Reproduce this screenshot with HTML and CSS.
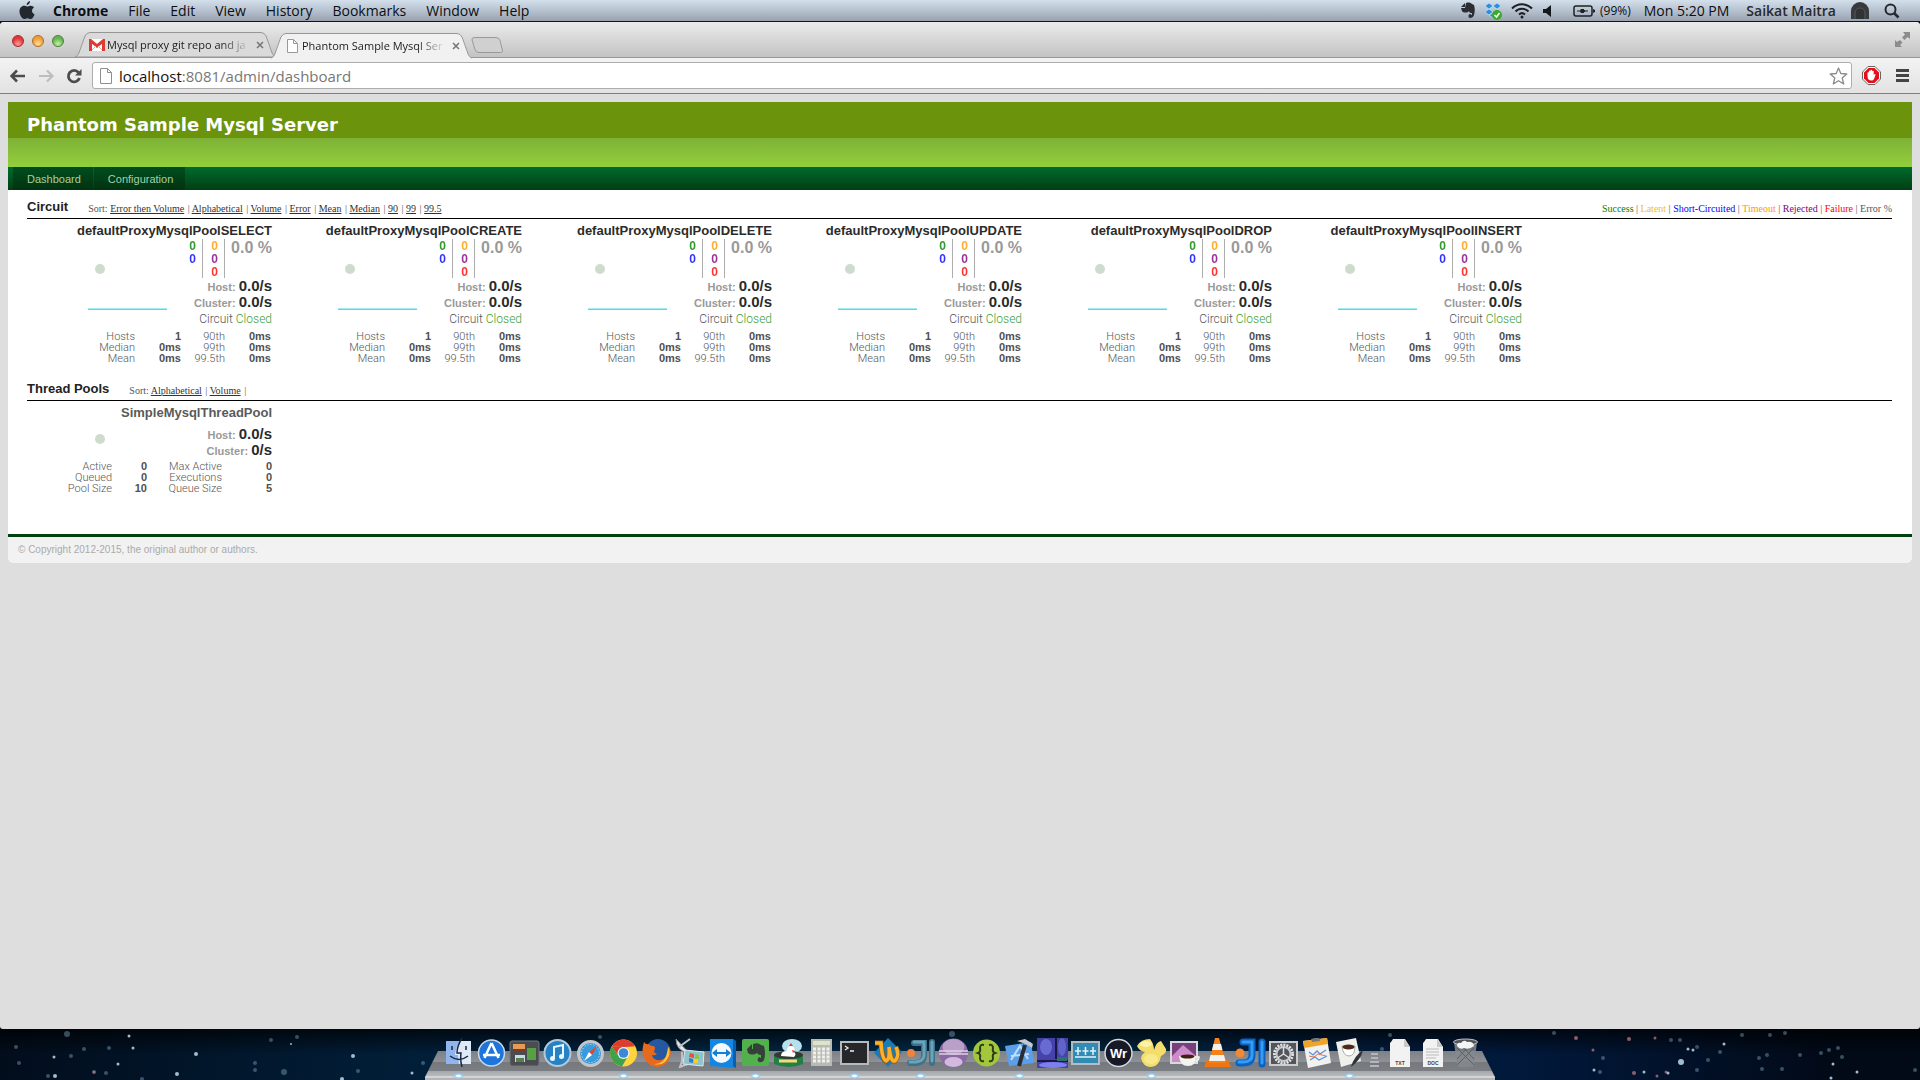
FILE: index.html
```html
<!DOCTYPE html>
<html lang="en">
<head>
<meta charset="utf-8">
<title>Phantom Sample Mysql Server</title>
<link rel="stylesheet" href="styles.css">
</head>
<body>
<header class="menubar">
  <svg class="apple" width="16" height="19" viewBox="0 0 16 19"><path d="M11 0c.2 2-1.500 4-3.300 4C7.500 2.200 9.200.400 11 0zM8 5.500C9 5.500 10 4.600 11.700 4.700c1.500.100 2.600.700 3.300 1.800-3 1.900-2.400 5.700.600 6.900-.700 2-2.300 4.600-3.900 4.600-1.300 0-1.800-.800-3.300-.800s-2 .800-3.300.800C3 18 .500 13.800.500 10.500.500 7 2.700 4.800 5 4.800c1.300 0 2.200.700 3 .700z" fill="#23272e"/></svg>
  <nav class="menus">
    <button class="menu app">Chrome</button><button class="menu">File</button><button class="menu">Edit</button><button class="menu">View</button><button class="menu">History</button><button class="menu">Bookmarks</button><button class="menu">Window</button><button class="menu">Help</button>
  </nav>
  <div class="status">
    <svg width="16" height="17" viewBox="0 0 16 17"><path d="M1 5l4-4v4zM6 1c3-1 5 0 6 1l2 1c1 3 1 7 0 10-.500 2-2 3-4 3s-2-4 0-4c1 0 1 1 2 1v-2c-1 0-3 0-3-2-1 2-6 2-7 0L1 6h4z" fill="#2a2d31"/></svg>
    <svg width="19" height="18" viewBox="0 0 19 18"><path d="M5 1l4 3-4 3-4-3zM13 1l4 3-4 3-4-3zM5 7l4 3-4 3-4-3zM13 7l4 3-4 3-4-3zM5 13l4-2 4 2-4 3z" fill="#2c8fd8" stroke="#e8f4fc" stroke-width=".5"/><circle cx="13" cy="13" r="5" fill="#3da92b"/><path d="M10.500 13l2 2 3-4" fill="none" stroke="#fff" stroke-width="1.500"/></svg>
    <svg class="wifi" width="22" height="17" viewBox="0 0 22 17"><path d="M1 6.500a14 14 0 0 1 20 0M4.500 9.500a9 9 0 0 1 13 0M8 12.500a4.500 4.500 0 0 1 6 0" fill="none" stroke="#1d2024" stroke-width="2"/><circle cx="11" cy="15" r="1.500" fill="#1d2024"/></svg>
    <svg class="volume" width="8" height="12" viewBox="0 0 8 12"><path d="M0 4h3l5-4v12L3 8H0z" fill="#15181b"/></svg>
    <svg width="22" height="12" viewBox="0 0 22 12"><path d="M3 1h14q2 0 2 2v6q0 2-2 2H3q-2 0-2-2V3q0-2 2-2z" fill="none" stroke="#222" stroke-width="1.500"/><path d="M20 4l2 1v2l-2 1zM4 5.500h3L8 4h3v1h4v.500h-3v1h3V7h-4v1H8L7 6.500H4z" fill="#222"/></svg>
    <span class="percent">(99%)</span>
    <span class="clock">Mon 5:20 PM</span>
    <span class="user">Saikat Maitra</span>
    <svg class="avatar" width="18" height="17" viewBox="0 0 18 17"><path d="M0 17V9a9 9 0 0 1 18 0v8z" fill="#383a3d"/><path d="M4 17v-6a5 5 0 0 1 10 0v6" fill="#303234" stroke="#55585b"/></svg>
    <svg width="16" height="16" viewBox="0 0 16 16"><circle cx="6.500" cy="6.500" r="5" fill="none" stroke="#25282c" stroke-width="2"/><path d="M10 10l4.500 4.500" stroke="#25282c" stroke-width="2.600"/></svg>
  </div>
</header>

<main class="window">
  <div class="tabstrip">
    <div class="lights"><button class="light red" aria-label="Close"></button><button class="light amber" aria-label="Minimise"></button><button class="light green" aria-label="Zoom"></button></div>
    <div class="tab">
      <svg class="shape" viewBox="0 0 202 25" preserveAspectRatio="none"><path d="M0 25C4 24 4 20 10 4Q12 .500 15 .500H187Q190 .500 192 4C198 20 198 24 202 25z" fill="#dadada" stroke="#969696"/></svg>
      <svg class="favicon" width="16" height="12" viewBox="0 0 16 12"><path d="M0 0h16v12H0z" fill="#fff"/><path d="M1.500 12V1.500L8 7l6.500-5.500V12" fill="none" stroke="#dc3c35" stroke-width="3"/><path d="M3 11l4-4M13 11L9 7" stroke="#e8a8a4"/></svg>
      <span class="tab-title">Mysql proxy git repo and ja</span>
      <button class="tab-close" aria-label="Close tab"><svg width="8" height="8" viewBox="0 0 8 8"><path d="M1 1l6 6M7 1L1 7" stroke="#777" stroke-width="1.600"/></svg></button>
    </div>
    <div class="tab active">
      <svg class="shape" viewBox="0 0 202 25" preserveAspectRatio="none"><path d="M0 25C4 24 4 20 10 4Q12 .500 15 .500H187Q190 .500 192 4C198 20 198 24 202 25" fill="#f1f1f1" stroke="#969696"/></svg>
      <svg class="favicon doc" width="11" height="14" viewBox="0 0 11 14"><path d="M.500.500h6l4 4v9H.500zM6.500.500v4h4" fill="#fff" stroke="#999"/></svg>
      <span class="tab-title">Phantom Sample Mysql Ser</span>
      <button class="tab-close" aria-label="Close tab"><svg width="8" height="8" viewBox="0 0 8 8"><path d="M1 1l6 6M7 1L1 7" stroke="#777" stroke-width="1.600"/></svg></button>
    </div>
    <button class="newtab" aria-label="New tab"><svg width="32" height="17" viewBox="0 0 32 17"><path d="M3 .500h22q3 0 4 3l2.500 10q.500 2-2 2H8q-3 0-4-3L1 3q-.500-2 2-2.500z" fill="#d0d0d0" stroke="#989898"/></svg></button>
    <button class="fullscreen" aria-label="Full screen"><svg width="15" height="15" viewBox="0 0 15 15"><path d="M8 0h7v7l-2.500-2-3 3-2.500-2.500 3-3zM0 8l2 2 3-2 2.500 2.500L5 13l2 2H0z" fill="#8c8c8c"/></svg></button>
  </div>
  <div class="toolbar">
    <button class="tool" aria-label="Back"><svg width="16" height="14" viewBox="0 0 16 14"><path d="M7 1.500L1.500 7 7 12.500M2 7h13" fill="none" stroke="#4c4c4c" stroke-width="2.600"/></svg></button>
    <button class="tool" aria-label="Forward"><svg width="16" height="14" viewBox="0 0 16 14"><path d="M9 1.500L14.500 7 9 12.500M14 7H1" fill="none" stroke="#bdbdbd" stroke-width="2.200"/></svg></button>
    <button class="tool" aria-label="Reload"><svg width="16" height="16" viewBox="0 0 16 16"><path d="M12.500 4.500A5.700 5.700 0 1 0 13.500 10" fill="none" stroke="#4c4c4c" stroke-width="2.800"/><path d="M15.500 1v6.500H9z" fill="#4c4c4c"/></svg></button>
    <div class="omnibox">
      <svg width="12" height="16" viewBox="0 0 12 16"><path d="M.500.500h7l4 4v11H.500zM7.500.500v4h4" fill="#fff" stroke="#8e8e8e"/></svg>
      <a class="url" href="#"><b>localhost</b>:8081/admin/dashboard</a>
      <button class="tool" aria-label="Bookmark"><svg width="19" height="18" viewBox="0 0 19 18"><path d="M9.500 1l2.300 5.500 6 .500-4.600 4 1.500 6-5.200-3.300L4.300 17l1.500-6-4.600-4 6-.500z" fill="#fff" stroke="#8a8a8a" stroke-width="1.300" stroke-linejoin="round"/></svg></button>
    </div>
    <button class="tool block" aria-label="AdBlock"><svg width="19" height="19" viewBox="0 0 19 19"><path d="M6 .500h7L18.500 6v7L13 18.500H6L.500 13V6z" fill="#fff" stroke="#666"/><path d="M6.500 2h6L17 6.500v6L12.500 17h-6L2 12.500v-6z" fill="#e3101c"/><path d="M5.500 10V6.500q.700-.700 1.400 0V5q.800-.800 1.500 0V4.200q.900-.800 1.700 0V5q.900-.700 1.600 0v4l1-1q1 0 .800.900L12 13q-.600 1.500-2.500 1.500-4 0-4-4.500z" fill="#fff"/></svg></button>
    <button class="tool more" aria-label="Menu"><svg width="13" height="13" viewBox="0 0 13 13"><path d="M0 1.500h13M0 6.500h13M0 11.500h13" stroke="#444" stroke-width="3"/></svg></button>
  </div>

  <div class="viewport">
    <article class="site">
      <header class="banner"><h1>Phantom Sample Mysql Server</h1></header>
      <nav class="sitenav"><a href="#">Dashboard</a><a href="#">Configuration</a></nav>
      <div class="content">
        <section>
          <div class="head">
            <h2>Circuit</h2>
            <p class="sort">Sort: <a href="#">Error then Volume</a> | <a href="#">Alphabetical</a> | <a href="#">Volume</a> | <a href="#">Error</a> | <a href="#">Mean</a> | <a href="#">Median</a> | <a href="#">90</a> | <a href="#">99</a> | <a href="#">99.5</a></p>
            <p class="legend"><span class="success">Success</span> | <span class="latent">Latent</span> | <span class="short">Short-Circuited</span> | <span class="timeout">Timeout</span> | <span class="rejected">Rejected</span> | <span class="failure">Failure</span> | <span>Error %</span></p>
          </div>
          <div class="monitors">
            <div class="monitor">
              <h3>defaultProxyMysqlPoolSELECT</h3>
              <div class="body">
                <svg class="chart" width="145" height="90"><circle cx="73" cy="30" r="5" fill="#cddccd"/><path d="M61 69.500h79" stroke="#a5eef8"/><path d="M61 70.500h79" stroke="#7cc0f8"/></svg>
                <div class="figures">
                  <div class="counts"><div class="count"><b class="success">0</b><b class="short">0</b></div><div class="count"><b class="timeout">0</b><b class="rejected">0</b><b class="failure">0</b></div><b class="rate-error">0.0 %</b></div>
                  <p class="rate">Host: <b>0.0/s</b></p><p class="rate">Cluster: <b>0.0/s</b></p><p class="state">Circuit <span>Closed</span></p>
                </div>
              </div>
              <table class="stats"><tr><th>Hosts</th><td>1</td><th>90th</th><td>0ms</td></tr><tr><th>Median</th><td>0ms</td><th>99th</th><td>0ms</td></tr><tr><th>Mean</th><td>0ms</td><th>99.5th</th><td>0ms</td></tr></table>
            </div>
            <div class="monitor">
              <h3>defaultProxyMysqlPoolCREATE</h3>
              <div class="body">
                <svg class="chart" width="145" height="90"><circle cx="73" cy="30" r="5" fill="#cddccd"/><path d="M61 69.500h79" stroke="#a5eef8"/><path d="M61 70.500h79" stroke="#7cc0f8"/></svg>
                <div class="figures">
                  <div class="counts"><div class="count"><b class="success">0</b><b class="short">0</b></div><div class="count"><b class="timeout">0</b><b class="rejected">0</b><b class="failure">0</b></div><b class="rate-error">0.0 %</b></div>
                  <p class="rate">Host: <b>0.0/s</b></p><p class="rate">Cluster: <b>0.0/s</b></p><p class="state">Circuit <span>Closed</span></p>
                </div>
              </div>
              <table class="stats"><tr><th>Hosts</th><td>1</td><th>90th</th><td>0ms</td></tr><tr><th>Median</th><td>0ms</td><th>99th</th><td>0ms</td></tr><tr><th>Mean</th><td>0ms</td><th>99.5th</th><td>0ms</td></tr></table>
            </div>
            <div class="monitor">
              <h3>defaultProxyMysqlPoolDELETE</h3>
              <div class="body">
                <svg class="chart" width="145" height="90"><circle cx="73" cy="30" r="5" fill="#cddccd"/><path d="M61 69.500h79" stroke="#a5eef8"/><path d="M61 70.500h79" stroke="#7cc0f8"/></svg>
                <div class="figures">
                  <div class="counts"><div class="count"><b class="success">0</b><b class="short">0</b></div><div class="count"><b class="timeout">0</b><b class="rejected">0</b><b class="failure">0</b></div><b class="rate-error">0.0 %</b></div>
                  <p class="rate">Host: <b>0.0/s</b></p><p class="rate">Cluster: <b>0.0/s</b></p><p class="state">Circuit <span>Closed</span></p>
                </div>
              </div>
              <table class="stats"><tr><th>Hosts</th><td>1</td><th>90th</th><td>0ms</td></tr><tr><th>Median</th><td>0ms</td><th>99th</th><td>0ms</td></tr><tr><th>Mean</th><td>0ms</td><th>99.5th</th><td>0ms</td></tr></table>
            </div>
            <div class="monitor">
              <h3>defaultProxyMysqlPoolUPDATE</h3>
              <div class="body">
                <svg class="chart" width="145" height="90"><circle cx="73" cy="30" r="5" fill="#cddccd"/><path d="M61 69.500h79" stroke="#a5eef8"/><path d="M61 70.500h79" stroke="#7cc0f8"/></svg>
                <div class="figures">
                  <div class="counts"><div class="count"><b class="success">0</b><b class="short">0</b></div><div class="count"><b class="timeout">0</b><b class="rejected">0</b><b class="failure">0</b></div><b class="rate-error">0.0 %</b></div>
                  <p class="rate">Host: <b>0.0/s</b></p><p class="rate">Cluster: <b>0.0/s</b></p><p class="state">Circuit <span>Closed</span></p>
                </div>
              </div>
              <table class="stats"><tr><th>Hosts</th><td>1</td><th>90th</th><td>0ms</td></tr><tr><th>Median</th><td>0ms</td><th>99th</th><td>0ms</td></tr><tr><th>Mean</th><td>0ms</td><th>99.5th</th><td>0ms</td></tr></table>
            </div>
            <div class="monitor">
              <h3>defaultProxyMysqlPoolDROP</h3>
              <div class="body">
                <svg class="chart" width="145" height="90"><circle cx="73" cy="30" r="5" fill="#cddccd"/><path d="M61 69.500h79" stroke="#a5eef8"/><path d="M61 70.500h79" stroke="#7cc0f8"/></svg>
                <div class="figures">
                  <div class="counts"><div class="count"><b class="success">0</b><b class="short">0</b></div><div class="count"><b class="timeout">0</b><b class="rejected">0</b><b class="failure">0</b></div><b class="rate-error">0.0 %</b></div>
                  <p class="rate">Host: <b>0.0/s</b></p><p class="rate">Cluster: <b>0.0/s</b></p><p class="state">Circuit <span>Closed</span></p>
                </div>
              </div>
              <table class="stats"><tr><th>Hosts</th><td>1</td><th>90th</th><td>0ms</td></tr><tr><th>Median</th><td>0ms</td><th>99th</th><td>0ms</td></tr><tr><th>Mean</th><td>0ms</td><th>99.5th</th><td>0ms</td></tr></table>
            </div>
            <div class="monitor">
              <h3>defaultProxyMysqlPoolINSERT</h3>
              <div class="body">
                <svg class="chart" width="145" height="90"><circle cx="73" cy="30" r="5" fill="#cddccd"/><path d="M61 69.500h79" stroke="#a5eef8"/><path d="M61 70.500h79" stroke="#7cc0f8"/></svg>
                <div class="figures">
                  <div class="counts"><div class="count"><b class="success">0</b><b class="short">0</b></div><div class="count"><b class="timeout">0</b><b class="rejected">0</b><b class="failure">0</b></div><b class="rate-error">0.0 %</b></div>
                  <p class="rate">Host: <b>0.0/s</b></p><p class="rate">Cluster: <b>0.0/s</b></p><p class="state">Circuit <span>Closed</span></p>
                </div>
              </div>
              <table class="stats"><tr><th>Hosts</th><td>1</td><th>90th</th><td>0ms</td></tr><tr><th>Median</th><td>0ms</td><th>99th</th><td>0ms</td></tr><tr><th>Mean</th><td>0ms</td><th>99.5th</th><td>0ms</td></tr></table>
            </div>
          </div>
        </section>
        <section>
          <div class="head">
            <h2>Thread Pools</h2>
            <p class="sort">Sort: <a href="#">Alphabetical</a> | <a href="#">Volume</a> |</p>
          </div>
          <div class="monitors">
            <div class="monitor pool">
              <h3>SimpleMysqlThreadPool</h3>
              <div class="body">
                <svg class="chart" width="145" height="38"><circle cx="73" cy="18" r="5" fill="#cddccd"/></svg>
                <div class="figures"><p class="rate">Host: <b>0.0/s</b></p><p class="rate">Cluster: <b>0/s</b></p></div>
              </div>
              <table class="stats"><tr><th>Active</th><td>0</td><th>Max Active</th><td>0</td></tr><tr><th>Queued</th><td>0</td><th>Executions</th><td>0</td></tr><tr><th>Pool Size</th><td>10</td><th>Queue Size</th><td>5</td></tr></table>
            </div>
          </div>
        </section>
      </div>
      <footer class="copyright">© Copyright 2012-2015, the original author or authors.</footer>
    </article>
  </div>
</main>

<footer class="desktop">
  <svg class="stars" width="1920" height="51" viewBox="0 0 1920 51" preserveAspectRatio="xMidYMid slice">
    <g fill="#7aa2bd" opacity=".45"><circle cx="67" cy="5" r="3"/><circle cx="16" cy="18" r="2"/><circle cx="71" cy="27" r="2"/><circle cx="84" cy="20" r="2"/><circle cx="109" cy="19" r="2"/><circle cx="19" cy="34" r="2"/><circle cx="94" cy="43" r="2"/><circle cx="48" cy="47" r="2"/><circle cx="106" cy="44" r="2"/><circle cx="142" cy="50" r="2"/><circle cx="271" cy="11" r="2"/><circle cx="297" cy="8" r="2"/><circle cx="255" cy="34" r="2"/><circle cx="255" cy="41" r="2"/><circle cx="284" cy="43" r="3"/><circle cx="358" cy="42" r="2"/><circle cx="423" cy="34" r="2"/><circle cx="600" cy="8" r="2"/><circle cx="952" cy="5" r="3"/><circle cx="1390" cy="6" r="2"/><circle cx="1382" cy="20" r="2"/><circle cx="1554" cy="4" r="2"/><circle cx="1603" cy="29" r="2"/><circle cx="1600" cy="43" r="2"/><circle cx="1671" cy="11" r="2"/><circle cx="1680" cy="11" r="2"/><circle cx="1697" cy="18" r="2"/><circle cx="1708" cy="31" r="2"/><circle cx="1697" cy="41" r="2"/><circle cx="1720" cy="23" r="2"/><circle cx="1742" cy="6" r="2"/><circle cx="1770" cy="6" r="2"/><circle cx="1785" cy="4" r="2"/><circle cx="1759" cy="29" r="2"/><circle cx="1767" cy="26" r="2"/><circle cx="1762" cy="40" r="2"/><circle cx="1782" cy="40" r="2"/><circle cx="1800" cy="26" r="2"/><circle cx="1821" cy="24" r="2"/><circle cx="1829" cy="21" r="2"/><circle cx="1838" cy="19" r="2"/><circle cx="1842" cy="28" r="2"/><circle cx="1915" cy="41" r="2"/></g>
    <g fill="#c77f86" opacity=".7"><circle cx="1629" cy="10" r="2"/><circle cx="1576" cy="9" r="2"/><circle cx="1655" cy="9" r="1.500"/><circle cx="1593" cy="21" r="1.500"/><circle cx="1634" cy="44" r="2"/><circle cx="1657" cy="47" r="1.500"/><circle cx="1666" cy="43" r="1.500"/><circle cx="94" cy="43" r="1.500"/></g>
    <g fill="#9fbdd0"><circle cx="129" cy="7" r="1.500"/><circle cx="133" cy="19" r="1.500"/><circle cx="54" cy="28" r="1.500"/><circle cx="55" cy="47" r="2"/><circle cx="118" cy="35" r="1.500"/><circle cx="196" cy="25" r="2"/><circle cx="177" cy="45" r="2"/><circle cx="353" cy="27" r="2"/><circle cx="342" cy="50" r="2"/><circle cx="412" cy="44" r="1.500"/><circle cx="291" cy="15" r="1"/><circle cx="1681" cy="33" r="3"/><circle cx="1688" cy="20" r="1.500"/><circle cx="1693" cy="21" r="1.500"/><circle cx="1724" cy="15" r="1.500"/><circle cx="1594" cy="41" r="1.500"/><circle cx="1644" cy="43" r="1.500"/><circle cx="1668" cy="44" r="1.500"/><circle cx="1833" cy="35" r="1.500"/><circle cx="1831" cy="49" r="1.500"/><circle cx="1857" cy="43" r="1.500"/></g>
  </svg>
  <div class="dock">
    <svg class="app-icon running" viewBox="0 0 33 30"><path d="M4 3h25v23H4z" fill="#8fb4ee"/><path d="M18 3h11v23H17l-1-9h-3q1-9 5-14z" fill="#dfe9f8"/><path d="M20 0q-5 8-5 15h4q-1 7 1 14M8 18q9 7 18 0M10 8v4M24 8v4" fill="none" stroke="#1b2a44" stroke-width="1.500"/></svg>
    <svg class="app-icon" viewBox="0 0 33 30"><circle cx="16.500" cy="15" r="13" fill="#1d74dd" stroke="#c9d7e6" stroke-width="1.500"/><path d="M16.500 5l-7 15M16.500 5l7 15M8 17h17" stroke="#fff" stroke-width="2.500" fill="none"/></svg>
    <svg class="app-icon" viewBox="0 0 33 30"><rect x="2" y="3" width="29" height="25" rx="2" fill="#4a4c52" stroke="#777"/><path d="M5 6h12v8H5z" fill="#e59a55"/><path d="M5 11h12v3H5z" fill="#7c3c22"/><path d="M19 10h9v12h-9z" fill="#57a044"/><path d="M7 17h10v7H7z" fill="#c8dae4"/><path d="M8 20h8v4H8z" fill="#577c4f"/></svg>
    <svg class="app-icon" viewBox="0 0 33 30"><circle cx="16.500" cy="15" r="13" fill="#2583c5" stroke="#b3c9da" stroke-width="2"/><path d="M13 20V9l9-2v11" fill="none" stroke="#e8f6ff" stroke-width="2"/><circle cx="11.500" cy="20.500" r="2.500" fill="#e8f6ff"/><circle cx="20.500" cy="18.500" r="2.500" fill="#e8f6ff"/></svg>
    <svg class="app-icon" viewBox="0 0 33 30"><circle cx="16.500" cy="15.500" r="12" fill="#3a9bdc" stroke="#c3c6c9" stroke-width="3"/><circle cx="16.500" cy="15.500" r="9" fill="none" stroke="#d9eefb" stroke-dasharray="1 2"/><path d="M23 8l-5 9-3-3z" fill="#e2462f"/><path d="M10 23l5-9 3 3z" fill="#fff"/></svg>
    <svg class="app-icon running" viewBox="0 0 33 30"><circle cx="16.500" cy="15" r="13.500" fill="#ffd43c"/><path d="M4.800 8.200A13.500 13.500 0 0 1 28.200 8.200L16.500 9z" fill="#dd3d31"/><path d="M4.800 8.200A13.500 13.500 0 0 0 15 28.400l6-10.400-10-1z" fill="#3fa34d"/><path d="M4.800 8.200L11 17l4-8h13.200z" fill="#dd3d31"/><circle cx="16.500" cy="15" r="6" fill="#f4f4f4"/><circle cx="16.500" cy="15" r="4.800" fill="#3d87d9"/></svg>
    <svg class="app-icon" viewBox="0 0 33 30"><circle cx="18" cy="13" r="12" fill="#2458a0"/><path d="M4 4q-3 10 0 16 5 9 14 9 12-2 13-15-1-4-2-6 1 12-8 14-8 1-9-5 3 1 5-1-3-1-3-3 2-3 0-5-4 0-5-2-3 1-5-2z" fill="#e66a1e"/><path d="M28 8q4 8-2 15-5 5-12 3 13 0 14-18z" fill="#fbc23c"/></svg>
    <svg class="app-icon" viewBox="0 0 33 30"><path d="M3 1q0 12 13 14z" fill="#e3e5e7" stroke="#888"/><path d="M6 9L17 1M9 14v9l-2 6 8-3-3-9" stroke="#bfc2c5" stroke-width="2" fill="none"/><path d="M12 12l19 2-1 14-20-2z" fill="#8fc3cf" stroke="#dce8ea"/><path d="M17 15l4 1v4l-5-1z" fill="#e4562c"/><path d="M22 16l4 1v4h-4z" fill="#8dc63f"/><path d="M16 20l4 1v4l-4-1z" fill="#2f7fd0"/><path d="M21 21h4v4h-4z" fill="#fdc830"/></svg>
    <svg class="app-icon" viewBox="0 0 33 30"><path d="M4 1h23l2 2v27l-25-2z" fill="#1486e2"/><path d="M27 1l3 2v27l-3-2z" fill="#0a5eae"/><circle cx="15.500" cy="15" r="10" fill="#f2f8fd"/><path d="M6 15l5-4v3h9v-3l5 4-5 4v-3h-9v3z" fill="#1380d8"/></svg>
    <svg class="app-icon running" viewBox="0 0 33 30"><rect x="3" y="1" width="27" height="27" rx="2" fill="#52b14c"/><path d="M8 11l5-5v5zM14 6q5-2 8 1l3 1q2 8 0 14-2 3-5 2-3-2 0-5l2 1v-3q-3 0-4-2-5 3-9 0l-1-4h6z" fill="#35403b"/></svg>
    <svg class="app-icon" viewBox="0 0 33 30"><ellipse cx="20" cy="8" rx="10" ry="7" fill="#b7e0ee"/><path d="M2 17h29v9q-14 6-29 0z" fill="#238044"/><ellipse cx="16.500" cy="17" rx="14.500" ry="4" fill="#313a33"/><path d="M9 18q0-5 6-5 0-5 4-5 5 1 3 6 3 2 0 5z" fill="#fff"/><path d="M17 8l2-3 2 3zM20 12l3 1-2 2z" fill="#e33b26"/><path d="M7 23h18" stroke="#f0dc7a" stroke-width="3"/></svg>
    <svg class="app-icon" viewBox="0 0 33 30"><path d="M6 1h21v27H6z" fill="#b8bab4"/><path d="M8 3h17v4H8z" fill="#dce5c8"/><path d="M8 11h17M8 15h17M8 19h17M8 23h17" stroke="#f0f0ee" stroke-width="3" stroke-dasharray="3 1.500"/></svg>
    <svg class="app-icon running" viewBox="0 0 33 30"><path d="M2 3h29v24H2z" fill="#b7b9bb"/><path d="M4 5h25v20H4z" fill="#25272a"/><path d="M7 8l3 2-3 2M12 13h4" fill="none" stroke="#eee" stroke-width="1.300"/></svg>
    <svg class="app-icon" viewBox="0 0 33 30"><path d="M17 0l14 14-14 15L3 15z" fill="#177cb7"/><path d="M4 5h6q1 16 5 18 4-1 3-14 2 16 6 14 5-5 1-14" fill="none" stroke="#9c5a0c" stroke-width="5"/><path d="M4 5h6q1 16 5 18 4-1 3-14 2 16 6 14 5-5 1-14" fill="none" stroke="#fbb02c" stroke-width="3.500"/></svg>
    <svg class="app-icon running" viewBox="0 0 33 30"><path d="M10 5h10v13q0 6-8 7H6M28 4v21" fill="none" stroke="#3c7189" stroke-width="6" stroke-linecap="round"/><path d="M10 4h10v13q0 6-8 7H6M28 4v19" fill="none" stroke="#6ba3b8" stroke-width="3" stroke-linecap="round"/><circle cx="7" cy="15" r="4" fill="#f0843c"/></svg>
    <svg class="app-icon" viewBox="0 0 33 30"><circle cx="16.500" cy="15" r="14.500" fill="#8a6ba1"/><ellipse cx="16.500" cy="9" rx="11" ry="8" fill="#b9a0c8"/><ellipse cx="16.500" cy="24" rx="9" ry="5" fill="#d3b9de"/><path d="M2 13h29M2 16h29" stroke="#ddd0e5" stroke-width="1.300"/></svg>
    <svg class="app-icon" viewBox="0 0 33 30"><circle cx="16.500" cy="15" r="13.500" fill="#a3c73c"/><path d="M14 7q-4-1-4 3 1 4-2 5 3 1 2 5 0 4 4 3M19 7q4-1 4 3-1 4 2 5-3 1-2 5 0 4-4 3" fill="none" stroke="#2e3c18" stroke-width="2"/></svg>
    <svg class="app-icon running" viewBox="0 0 33 30"><path d="M2 8l26-4 3 21-25 3z" fill="#5a9fe8"/><path d="M8 22l9-14 8 13M8 18l18-2" stroke="#bfdfff" stroke-width="2" fill="none"/><path d="M22 7l-6 21" stroke="#2c2d30" stroke-width="4"/><path d="M14 3l8-2 8 5-1 4-6-4z" fill="#c6c9cc"/></svg>
    <svg class="app-icon" viewBox="0 0 33 30"><path d="M1 0h31v30H1z" fill="#4543a9"/><ellipse cx="10" cy="9" rx="6" ry="8" fill="#6a6bd2"/><ellipse cx="26" cy="9" rx="4" ry="9" fill="#6163c9"/><path d="M20 0v21M1 23h31" stroke="#181848" stroke-width="2"/><ellipse cx="17" cy="27" rx="14" ry="3" fill="#7d7ef0"/><path d="M21 19h10v4H21z" fill="#2b716e"/></svg>
    <svg class="app-icon" viewBox="0 0 33 30"><path d="M2 3h29v24H2z" fill="#b4bcbf"/><path d="M4 5h25v20H4z" fill="#318bb2"/><path d="M6 13h6M13.500 13h6M21 13h6M9 9v8M16.500 9v8M24 9v8M6 19h21" stroke="#dff4fc" stroke-width="1.500"/></svg>
    <svg class="app-icon" viewBox="0 0 33 30"><circle cx="16.500" cy="15" r="13.500" fill="#171a26" stroke="#d4d8dc" stroke-width="1.500"/><text x="16.500" y="20" text-anchor="middle" font-size="13" font-weight="700" fill="#fff">Wr</text></svg>
    <svg class="app-icon running" viewBox="0 0 33 30"><path d="M2 8q4-7 13-7 4 5 4 11 2-8 7-9l5 8q1 4-5 7-2 11-10 11T6 20q1-4 4-6-6-1-8-6z" fill="#f3de6c"/><ellipse cx="11" cy="6" rx="6" ry="3" fill="#fbf1a8"/><ellipse cx="16" cy="21" rx="7" ry="5" fill="#f8e98a"/></svg>
    <svg class="app-icon" viewBox="0 0 33 30"><path d="M2 3h28v23H2z" fill="#d9d9db"/><path d="M4 5h24v19H4z" fill="#76407c"/><path d="M4 18L15 7l13 11v6H4z" fill="#cf8ac9"/><path d="M11 18h17q0 10-8 10t-9-10z" fill="#f5f3ef"/><ellipse cx="19.500" cy="18.500" rx="7" ry="2" fill="#40210f"/><path d="M28 19h3q0 4-4 4" fill="none" stroke="#f5f3ef" stroke-width="1.500"/></svg>
    <svg class="app-icon" viewBox="0 0 33 30"><path d="M6 22h21l3 7H3z" fill="#ef7414"/><path d="M14 0h4l7 25H8z" fill="#f6811b"/><path d="M12.500 6h7.500l1.500 6H11zM9.500 17h13.500l1.500 6H8z" fill="#f3f1ed"/></svg>
    <svg class="app-icon" viewBox="0 0 33 30"><path d="M9 4h9v13q0 8-9 8H5M28 4v22" fill="none" stroke="#0b62c5" stroke-width="7" stroke-linecap="round"/><path d="M9 4h9v13q0 7-9 7H5M28 4v21" fill="none" stroke="#359cf3" stroke-width="3" stroke-linecap="round"/><circle cx="6" cy="15" r="4.500" fill="#f28a35"/></svg>
    <svg class="app-icon" viewBox="0 0 33 30"><path d="M2 3h29v25H2z" fill="#c9cbcd"/><path d="M4 5h25v21H4z" fill="#52565a"/><circle cx="16.500" cy="16" r="9" fill="none" stroke="#e2e4e5" stroke-width="3" stroke-dasharray="2 1"/><circle cx="16.500" cy="16" r="7" fill="none" stroke="#c5c8ca" stroke-width="2"/><path d="M16.500 16V9M16.500 16l-6 4M16.500 16l6 4" stroke="#ddd" stroke-width="1.500"/></svg>
    <svg class="app-icon" viewBox="0 0 33 30"><path d="M3 3l24-3 4 25-23 5z" fill="#f1f2ef"/><path d="M3 3l24-3 1 6-24 4z" fill="#eea42c"/><path d="M11 1l8-2 1 4-8 1z" fill="#777"/><path d="M9 14l4 3 4-4 3 3 6-4M10 22l5-3 4 3 8-4" stroke="#5a8ee0" stroke-width="1.300" fill="none"/><path d="M9 18l5 1 4-3 8 2" stroke="#e0734e" fill="none"/></svg>
    <svg class="app-icon running" viewBox="0 0 33 30"><path d="M3 4l20-4 5 23-20 6z" fill="#efefec"/><path d="M9 8h13q0 10-6 10T9 8z" fill="#fff" stroke="#aaa"/><ellipse cx="15.500" cy="9" rx="6" ry="2.500" fill="#4d2a17"/><path d="M30 12q-2 10-12 17 3-11 12-17z" fill="#303338"/></svg>
    <svg class="divider" viewBox="0 0 17 30"><path d="M5 16h7M5 20h7M4 24h9M4 28h9" stroke="#b3b6ba" stroke-width="2"/></svg>
    <svg class="app-icon" viewBox="0 0 33 30"><path d="M8 4l2-3h12l5 8v20H7V5z" fill="#f2f2f2"/><path d="M21 1v8h6z" fill="#c9c9c9"/><text x="17" y="27" text-anchor="middle" font-size="5" font-weight="700" fill="#444">TXT</text></svg>
    <svg class="app-icon" viewBox="0 0 33 30"><path d="M8 4l2-3h12l5 8v20H7V5z" fill="#f2f2f2"/><path d="M21 1v8h6z" fill="#c9c9c9"/><path d="M10 11h13M10 14h13M10 17h13M10 20h10" stroke="#bbb"/><text x="17" y="27" text-anchor="middle" font-size="5" font-weight="700" fill="#444">DOC</text></svg>
    <svg class="app-icon" viewBox="0 0 33 30"><path d="M5 4h23l-3 24q-9 3-17 0z" fill="#85898d" opacity=".85"/><path d="M8 10l17 17M25 10L8 27M13 8l12 13M20 8L8 21" stroke="#4d5155" opacity=".7"/><ellipse cx="16.500" cy="4" rx="12" ry="3" fill="#52565a" stroke="#bfc3c6"/><path d="M8 8q0-4 4-3 3-4 6-1 6-1 7 4-5 4-10 2-4 2-7-2z" fill="#f4f4f4"/></svg>
  </div>
</footer>
</body>
</html>
```
FILE: styles.css
```css
* { box-sizing: border-box; }
body, h1, h2, h3, p { margin: 0; }
body {
  display: flex;
  flex-direction: column;
  min-height: 100vh;
  background: #04101f;
  font-family: "Liberation Sans", Arial, sans-serif;
}
button { padding: 0; border: 0; background: none; font: inherit; color: inherit; }
svg { display: block; flex: none; }

.menubar {
  display: flex;
  align-items: center;
  height: 22px;
  padding: 0 20px 0 19px;
  background: linear-gradient(#d3dfeb, #b7c2d0 50%, #98a2ae);
  border-bottom: 1px solid #10161e;
  font: 14px/20px "Open Sans", "Noto Sans", sans-serif;
  color: #0c0e11;
}
.menus { display: flex; gap: 20px; margin-left: 18px; }
.app { font-weight: 700; }
.status { display: flex; align-items: center; gap: 8px; margin-left: auto; }
.volume { margin: 0 14px 0 2px; }
.percent { margin-left: -3px; font-size: 12px; }
.clock { margin-left: 5px; font-weight: 500; }
.user { margin-left: 9px; font-weight: 600; color: #26292d; }
.avatar { margin: 0 7px; }

.window {
  flex: 1;
  display: flex;
  flex-direction: column;
  border-radius: 4px 4px 3px 3px;
  background: #dedede;
  overflow: hidden;
}
.tabstrip {
  display: flex;
  align-items: flex-end;
  height: 36px;
  padding-right: 10px;
  background: linear-gradient(#ebebeb, #c3c3c3);
  border-bottom: 1px solid #969696;
  font: 11px/14px "Open Sans", "Noto Sans", sans-serif;
}
.lights { display: flex; gap: 8px; margin: 0 11px 10px 12px; }
.light { width: 12px; height: 12px; border-radius: 50%; border: 1px solid #777; }
.red { background: radial-gradient(circle at 50% 80%, #ff9d95, #e0383d 60%); border-color: #a22b30; }
.amber { background: radial-gradient(circle at 50% 80%, #ffe08c, #ef9d3e 60%); border-color: #ad6b23; }
.green { background: radial-gradient(circle at 50% 80%, #c8f09c, #66b458 60%); border-color: #48803c; }
.tab {
  position: relative;
  display: flex;
  align-items: center;
  width: 201px;
  height: 25px;
  padding: 0 12px 0 14px;
}
.tab.active { margin: 0 0 -1px -5px; }
.shape { position: absolute; inset: 0; width: 100%; height: 100%; overflow: visible; }
.favicon, .tab-title, .tab-close { position: relative; }
.tab-title {
  flex: 1;
  margin-left: 2px;
  white-space: nowrap;
  color: #1c1c1c;
  mask-image: linear-gradient(90deg, #000 80%, transparent);
}
.doc { margin-left: 2px; }
.doc + .tab-title { margin-left: 4px; }
.tab-close { margin-left: 6px; width: 8px; }
.newtab { margin: 0 0 3px -1px; }
.fullscreen { margin: 0 0 10px auto; }

.toolbar {
  display: flex;
  align-items: center;
  gap: 12px;
  height: 36px;
  padding: 0 11px 0 10px;
  background: linear-gradient(#f3f3f3, #e2e2e2);
  border-bottom: 1px solid #7f7f7f;
}
.omnibox {
  flex: 1;
  display: flex;
  align-items: center;
  height: 27px;
  margin-left: -2px;
  padding: 0 3px 0 7px;
  background: #fff;
  border: 1px solid #adadad;
  border-radius: 3px;
}
.url {
  flex: 1;
  margin-left: 7px;
  font: 15px/22px "Open Sans", "Noto Sans", sans-serif;
  color: #777;
  text-decoration: none;
}
.url b { font-weight: 400; color: #111; }
.block { margin-left: -2px; }
.more { margin-left: 3px; }

.viewport { flex: 1; padding: 8px; }
.site { background: #fff; border-radius: 0 0 6px 6px; overflow: hidden; }
.banner {
  height: 65px;
  padding: 11px 19px 0;
  background: linear-gradient(#6b930b, #6b930b) 0 0 / 100% 36px no-repeat, linear-gradient(#7eb237 36px, #92cf3c);
}
.banner h1 { font: 700 18px/24px "DejaVu Sans", Verdana, sans-serif; color: #fff; }
.sitenav {
  display: flex;
  gap: 1px;
  padding-left: 5px;
  background: linear-gradient(#006b2d, #003e13);
}
.sitenav a {
  padding: 1px 12px 0 14px;
  font-size: 11px;
  line-height: 22px;
  color: #a9cfa4;
  text-decoration: none;
  background: linear-gradient(#004e20, #00320f);
}
.content { padding: 4px 20px 28px 19px; }
.head {
  display: flex;
  align-items: flex-end;
  height: 25px;
  border-bottom: 1px solid #000;
}
h2 { font-size: 13px; line-height: 22px; color: #222; }
.sort, .legend {
  font: 10px/18px "Liberation Serif", "Times New Roman", serif;
  color: #555;
}
.sort { margin-left: 20px; }
.sort a { margin-right: 1px; color: #333; }
.legend { margin-left: auto; }
.success { color: #008000; }
.latent { color: #f5c400; }
.short { color: #0000ff; }
.timeout { color: #ff9900; }
.rejected { color: #800080; }
.failure { color: #ff0000; }

.monitors { display: flex; flex-wrap: wrap; gap: 5px; padding-bottom: 12px; }
.monitor { width: 245px; padding-top: 4px; text-align: right; }
h3 { font-size: 13px; line-height: 16px; color: #2b2b2b; }
.body { display: flex; justify-content: space-between; }
.figures { flex: 1; margin-left: -50px; }
.counts {
  display: flex;
  justify-content: flex-end;
  height: 39px;
  font-size: 12px;
  line-height: 13px;
}
.count { width: 22px; padding: 1px 6px 0 0; border-right: 1px solid #999; opacity: .8; }
.count b { display: block; }
.rate-error { width: 47px; font-size: 16px; line-height: 17px; color: #999; }
.rate { height: 16px; font-size: 11px; font-weight: 700; line-height: 16px; color: #999; }
.rate b { font-size: 15px; color: #2b2b2b; }
.state { font: 300 12px/18px Roboto, "Liberation Sans", sans-serif; color: #555; }
.state span { color: #3a9f3a; }
.stats {
  width: 244px;
  margin-top: 2px;
  border-collapse: collapse;
  table-layout: fixed;
  font-size: 11px;
  line-height: 11px;
}
.stats th, .stats td { padding: 0; text-align: right; }
.stats th { font: 300 11px/11px Roboto, "Liberation Sans", sans-serif; color: #555; }
.stats td { font-weight: 700; color: #505050; }
.stats th:nth-child(1) { width: 108px; }
.stats td:nth-child(2) { width: 46px; }
.stats th:nth-child(3) { width: 44px; }
.pool h3 { color: #5a5a5a; }
.pool .figures { padding-top: 5px; }
.pool .stats { width: 245px; }
.pool th:nth-child(1) { width: 85px; }
.pool td:nth-child(2) { width: 35px; }
.pool th:nth-child(3) { width: 75px; }
.copyright {
  padding: 0 10px;
  border-top: 3px solid #00420f;
  background: #f2f2f2;
  font-size: 10px;
  line-height: 26px;
  color: #aaa;
}

.desktop {
  position: relative;
  display: flex;
  justify-content: center;
  height: 51px;
  overflow: hidden;
  background: linear-gradient(rgba(0, 0, 0, .7), transparent 50%), linear-gradient(90deg, #020d1c, #01213d 25%, #012a48 50%, #01183a 80%, #020a18 95%);
}
.stars { position: absolute; top: 0; left: 0; width: 100%; }
.dock {
  position: relative;
  display: flex;
  padding: 9px 13px 0 17px;
  background: linear-gradient(transparent 22px, #7d8187 22px, #8e9196 33px, #75797e 33px, #7b7f84 42px, #a5a7aa 42px, #b8babc 47px, #f1f1f1 48px, #b5b5b5 49px);
  clip-path: polygon(0 0, 100% 0, 100% 21px, calc(100% - 13px) 22px, 100% 48px, 100% 100%, 0 100%, 0 48px, 13px 22px, 0 21px);
}
.app-icon { width: 33px; height: 42px; padding-bottom: 12px; overflow: hidden; }
.running { background: radial-gradient(ellipse 6px 3px at 50% 38px, #fff 30%, #8fd0fa 60%, transparent); }
.divider { width: 17px; height: 30px; }
```
